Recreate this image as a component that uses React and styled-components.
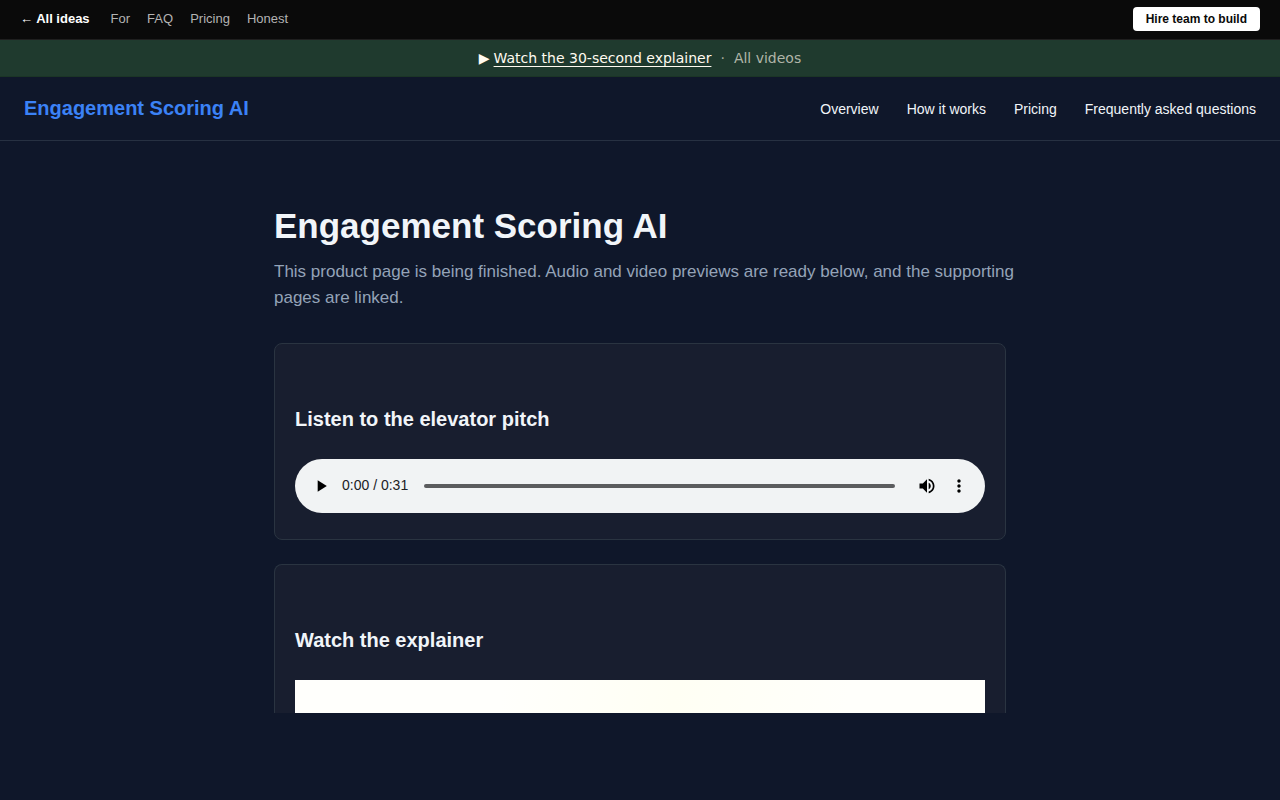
import React from "react";
import styled, { createGlobalStyle } from "styled-components";

const GlobalStyle = createGlobalStyle`
  *, *::before, *::after { box-sizing: border-box; }
  body {
    margin: 0;
    background: #0f172a;
    color: #f1f5f9;
    font-family: "Liberation Sans", Arial, sans-serif;
    font-size: 16px;
  }
  a { color: inherit; text-decoration: none; }
  h1, h2, p { margin: 0; }
`;

const TopBar = styled.nav`
  display: flex;
  align-items: center;
  justify-content: space-between;
  height: 40px;
  padding: 0 20px 2px;
  background: #0a0a0a;
  border-bottom: 1px solid #1f1f1f;
  font-size: 13px;
`;

const TopLinks = styled.div`
  display: flex;
  align-items: center;
  gap: 17px;
`;

const TopLink = styled.a`
  color: #b3b3b3;
`;

const BackLink = styled.a`
  margin-right: 4px;
  color: #ffffff;
  font-weight: 700;
`;

const HireButton = styled.button`
  height: 24px;
  padding: 0 13px;
  border: 0;
  border-radius: 4px;
  background: #ffffff;
  color: #0a0a0a;
  font: 700 12px "Liberation Sans", Arial, sans-serif;
`;

const Banner = styled.div`
  display: flex;
  align-items: center;
  justify-content: center;
  height: 37px;
  background: #1f3a2e;
  border-bottom: 1px solid #1b3526;
  color: #fffbf0;
  font-family: "DejaVu Sans", sans-serif;
  font-size: 14px;
  line-height: 20px;
`;

const WatchLink = styled.a`
  margin-left: 4px;
  text-decoration: underline 1px;
  text-underline-offset: 3px;
  text-decoration-skip-ink: none;
`;

const Dot = styled.span`
  margin: 0 9px;
  color: #a4ab9e;
`;

const VideosLink = styled.a`
  color: #b0b5a8;
`;

const Header = styled.header`
  display: flex;
  align-items: center;
  justify-content: space-between;
  height: 64px;
  padding: 0 24px;
  border-bottom: 1px solid #273142;
`;

const Brand = styled.a`
  color: #3b82f6;
  font-size: 20px;
  font-weight: 700;
`;

const Nav = styled.nav`
  display: flex;
  gap: 28px;
  font-size: 14px;
`;

const Main = styled.main`
  max-width: 780px;
  margin: 0 auto;
  padding: 64px 24px 0;
`;

const Title = styled.h1`
  font-size: 35px;
  line-height: 42px;
`;

const Lead = styled.p`
  margin: 12px -12px 32px 0;
  color: #94a3b8;
  font-size: 17px;
  line-height: 26px;
`;

const Card = styled.section`
  margin-bottom: 24px;
  padding: 64px 20px ${(p) => (p.$open ? "0" : "26px")};
  background: #181e2f;
  border: 1px solid #2a3441;
  border-bottom-width: ${(p) => (p.$open ? "0" : "1px")};
  border-radius: ${(p) => (p.$open ? "8px 8px 0 0" : "8px")};
`;

const CardTitle = styled.h2`
  margin-bottom: 28px;
  font-size: 20px;
  line-height: 23px;
`;

const Player = styled.div`
  display: flex;
  align-items: center;
  height: 54px;
  padding: 0 10px;
  border-radius: 27px;
  background: #f1f3f4;
  color: #202124;
  font-size: 14px;
`;

const IconButton = styled.button`
  display: flex;
  flex: none;
  align-items: center;
  justify-content: center;
  width: 32px;
  height: 32px;
  padding: 0;
  border: 0;
  background: none;
  color: #000000;
`;

const Time = styled.span`
  flex: none;
  margin: 0 16px 0 5px;
  padding-bottom: 2px;
`;

const Seek = styled.input`
  appearance: none;
  flex: 1;
  min-width: 0;
  height: 4px;
  margin: 0 16px 0 0;
  border-radius: 2px;
  background: #5b5c5e;
  &::-webkit-slider-thumb {
    appearance: none;
    width: 0;
    height: 0;
  }
`;

const VideoFrame = styled.div`
  height: 33px;
  background: linear-gradient(100deg, #fffffc 30%, #fffff4 55%, #fffffb 80%);
`;

const Icon = ({ d }) => (
  <svg width="20" height="20" viewBox="0 0 24 24" fill="currentColor" aria-hidden="true">
    <path d={d} />
  </svg>
);

const PLAY = "M8 5v14l11-7z";
const VOLUME =
  "M3 9v6h4l5 5V4L7 9H3zm13.5 3c0-1.77-1.02-3.29-2.5-4.03v8.05c1.48-.73 2.5-2.25 2.5-4.02zM14 3.23v2.06c2.89.86 5 3.54 5 6.71s-2.11 5.85-5 6.71v2.06c4.01-.91 7-4.49 7-8.77s-2.99-7.86-7-8.77z";
const MORE =
  "M12 8c1.1 0 2-.9 2-2s-.9-2-2-2-2 .9-2 2 .9 2 2 2zm0 2c-1.1 0-2 .9-2 2s.9 2 2 2 2-.9 2-2-.9-2-2-2zm0 6c-1.1 0-2 .9-2 2s.9 2 2 2 2-.9 2-2-.9-2-2-2z";

export default function App() {
  return (
    <>
      <GlobalStyle />
      <TopBar>
        <TopLinks>
          <BackLink href="#ideas">← All ideas</BackLink>
          <TopLink href="#for">For</TopLink>
          <TopLink href="#faq">FAQ</TopLink>
          <TopLink href="#pricing">Pricing</TopLink>
          <TopLink href="#honest">Honest</TopLink>
        </TopLinks>
        <HireButton type="button">Hire team to build</HireButton>
      </TopBar>
      <Banner>
        <span>▶</span>
        <WatchLink href="#explainer">Watch the 30-second explainer</WatchLink>
        <Dot>·</Dot>
        <VideosLink href="#videos">All videos</VideosLink>
      </Banner>
      <Header>
        <Brand href="#top">Engagement Scoring AI</Brand>
        <Nav>
          <a href="#overview">Overview</a>
          <a href="#how">How it works</a>
          <a href="#pricing">Pricing</a>
          <a href="#faq">Frequently asked questions</a>
        </Nav>
      </Header>
      <Main>
        <Title>Engagement Scoring AI</Title>
        <Lead>
          This product page is being finished. Audio and video previews are ready below, and the
          supporting pages are linked.
        </Lead>
        <Card>
          <CardTitle>Listen to the elevator pitch</CardTitle>
          <Player>
            <IconButton type="button" aria-label="Play">
              <Icon d={PLAY} />
            </IconButton>
            <Time>0:00 / 0:31</Time>
            <Seek type="range" min="0" max="31" defaultValue="0" aria-label="Seek" />
            <IconButton type="button" aria-label="Mute">
              <Icon d={VOLUME} />
            </IconButton>
            <IconButton type="button" aria-label="More options">
              <Icon d={MORE} />
            </IconButton>
          </Player>
        </Card>
        <Card $open id="explainer">
          <CardTitle>Watch the explainer</CardTitle>
          <VideoFrame />
        </Card>
      </Main>
    </>
  );
}
